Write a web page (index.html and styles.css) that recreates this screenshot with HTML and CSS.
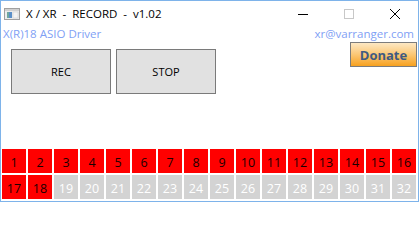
FILE: index.html
```html
<!DOCTYPE html>
<html>
<head>
<meta charset="utf-8">
<link rel="stylesheet" href="styles.css">
</head>
<body>
<div class="window">
  <div class="titlebar">
    <svg class="app-icon" width="16" height="12" viewBox="0 0 16 12">
      <rect x="0.5" y="0.5" width="15" height="11" fill="#ececec" stroke="#a0a0a0"/>
      <rect x="1" y="1" width="14" height="2" fill="#d0d0d0"/>
      <rect x="3" y="4" width="5" height="6" fill="#6fa8a0"/>
      <rect x="5" y="4" width="3" height="6" fill="#5b8fc8"/>
      <rect x="9" y="4" width="5" height="6" fill="#f4f4f4" stroke="#c8c8c8" stroke-width="0.5"/>
    </svg>
    <span class="title">X / XR  -  RECORD  -  v1.02</span>
    <div class="caption">
      <div class="cap-btn">
        <svg width="10" height="10" viewBox="0 0 10 10"><line x1="0" y1="5.5" x2="10" y2="5.5" stroke="#000" stroke-width="1"/></svg>
      </div>
      <div class="cap-btn">
        <svg width="10" height="10" viewBox="0 0 10 10"><rect x="0.5" y="0.5" width="9" height="9" fill="none" stroke="#c8c8c8" stroke-width="1"/></svg>
      </div>
      <div class="cap-btn">
        <svg width="10" height="10" viewBox="0 0 10 10"><path d="M0 0 L10 10 M10 0 L0 10" stroke="#000" stroke-width="1"/></svg>
      </div>
    </div>
  </div>
  <div class="info">
    <span class="driver">X(R)18 ASIO Driver</span>
    <span class="email">xr@varranger.com</span>
  </div>
  <div class="controls">
    <div class="buttons">
      <button class="btn">REC</button>
      <button class="btn">STOP</button>
    </div>
    <button class="donate">Donate</button>
  </div>
  <div class="channels">
    <div class="ch on">1</div><div class="ch on">2</div><div class="ch on">3</div><div class="ch on">4</div>
    <div class="ch on">5</div><div class="ch on">6</div><div class="ch on">7</div><div class="ch on">8</div>
    <div class="ch on">9</div><div class="ch on">10</div><div class="ch on">11</div><div class="ch on">12</div>
    <div class="ch on">13</div><div class="ch on">14</div><div class="ch on">15</div><div class="ch on">16</div>
    <div class="ch on">17</div><div class="ch on">18</div><div class="ch off">19</div><div class="ch off">20</div>
    <div class="ch off">21</div><div class="ch off">22</div><div class="ch off">23</div><div class="ch off">24</div>
    <div class="ch off">25</div><div class="ch off">26</div><div class="ch off">27</div><div class="ch off">28</div>
    <div class="ch off">29</div><div class="ch off">30</div><div class="ch off">31</div><div class="ch off">32</div>
  </div>
</div>
</body>
</html>
```

FILE: styles.css
```css
html, body {
  margin: 0;
  padding: 0;
  background: #ffffff;
}
body {
  font-family: "Open Sans", "Noto Sans", sans-serif;
  font-size: 12px;
}
.window {
  box-sizing: border-box;
  width: 419px;
  height: 202px;
  border: 1px solid #7eb3ea;
  background: #ffffff;
  display: flex;
  flex-direction: column;
}
.titlebar {
  height: 25px;
  display: flex;
  align-items: center;
}
.app-icon {
  margin-left: 3px;
  margin-top: 1px;
  flex: none;
}
.title {
  margin-left: 6px;
  white-space: pre;
  color: #000;
  font-size: 11.5px;
  flex: 1;
}
.caption {
  display: flex;
  height: 100%;
}
.cap-btn {
  width: 46px;
  display: flex;
  align-items: center;
  justify-content: center;
  padding-top: 1px;
}
.cap-btn svg {
  display: block;
}
.info {
  height: 15px;
  display: flex;
  justify-content: space-between;
  align-items: center;
  padding: 0 4px 0 2px;
  color: #7f9ff5;
  font-size: 11.5px;
}
.controls {
  display: flex;
  justify-content: space-between;
  align-items: flex-start;
  padding: 1px 1px 0 10px;
}
.buttons {
  display: flex;
  gap: 5px;
  margin-top: 7px;
}
.btn {
  width: 100px;
  height: 45px;
  background: #e1e1e1;
  border: 1px solid #7a7a7a;
  font-family: "Open Sans", "Noto Sans", sans-serif;
  font-size: 11px;
  color: #000;
  padding: 0;
}
.donate {
  width: 67px;
  height: 25px;
  border: 1px solid #7c7c7c;
  background: linear-gradient(to bottom, #fde8c4 0%, #fbc775 50%, #f7a11f 100%);
  font-family: "Open Sans", "Noto Sans", sans-serif;
  font-weight: bold;
  font-size: 13px;
  color: #3f5a82;
  padding: 0;
}
.channels {
  margin-top: auto;
  padding: 0 0 2px 1px;
  display: grid;
  grid-template-columns: repeat(16, 24px);
  grid-auto-rows: 24px;
  gap: 2px;
}
.ch {
  display: flex;
  align-items: center;
  justify-content: center;
  font-size: 12.5px;
  padding-top: 2px;
  box-sizing: border-box;
}
.ch.on {
  background: #ff0000;
  color: #1a0000;
}
.ch.off {
  background: #d3d3d3;
  color: #ffffff;
}
```
